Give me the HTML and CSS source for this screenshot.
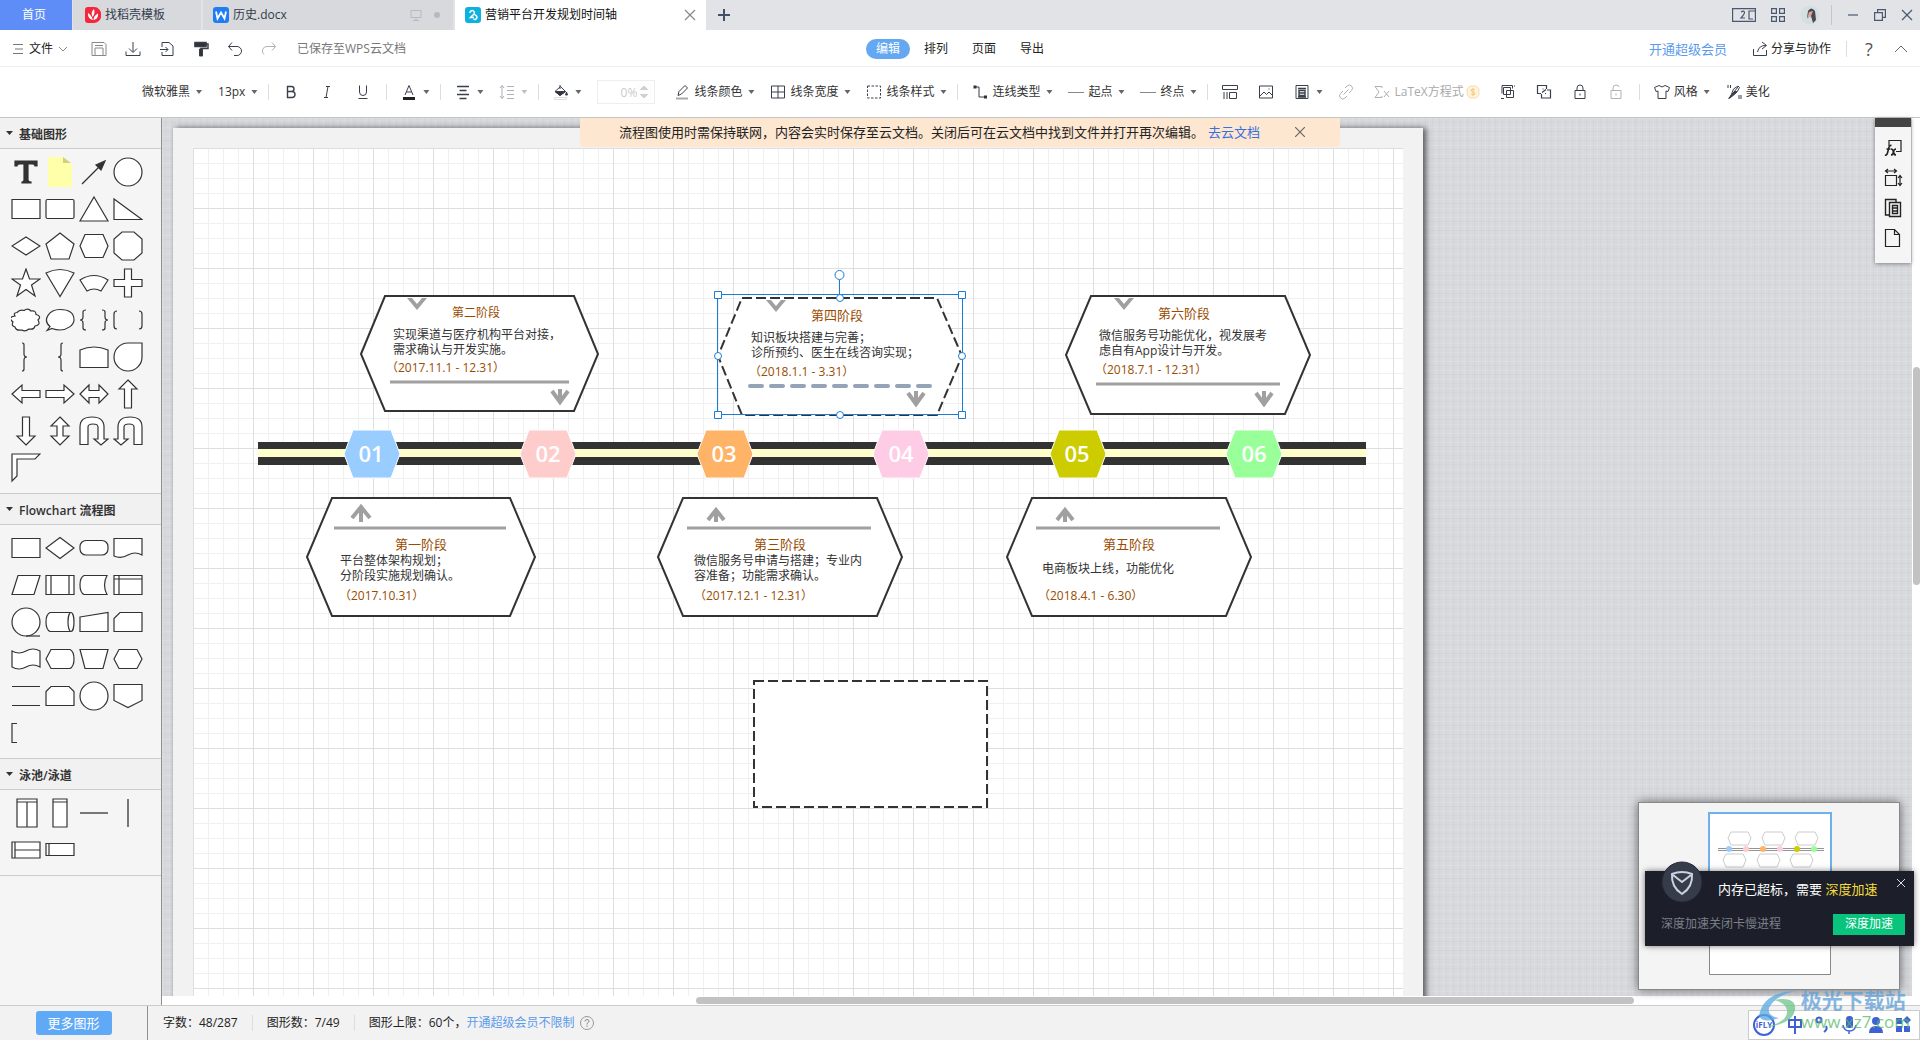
FILE: index.html
```html
<!DOCTYPE html>
<html lang="zh-CN">
<head>
<meta charset="utf-8">
<title>营销平台开发规划时间轴</title>
<link rel="stylesheet" href="styles.css">
</head>
<body>
<header class="tabs">
  <a class="tab tab-home" href="#">首页</a>
  <a class="tab tab-store" href="#">
    <svg class="logo" viewBox="0 0 16 16"><path d="M3 0h6a7 7 0 0 1 7 8a7 7 0 0 1-7 8H3a3 3 0 0 1-3-3V3a3 3 0 0 1 3-3z" fill="#f5273c"/><path d="M8 13C4 12 2.500 9 3 6c2 1 3.500 3 5 7zM7.500 10C6 7 6.500 4 9 2c1 3 .5 6-1.500 8zM8.500 13c0-3 1.500-5 4.500-6.500C13.500 10 11.500 12.500 8.500 13z" fill="#fff"/></svg>
    <span>找稻壳模板</span>
  </a>
  <a class="tab tab-doc" href="#">
    <svg class="logo" viewBox="0 0 16 16"><rect width="16" height="16" rx="3" fill="#1f7df3"/><path d="M3 4.500l1.500 7L8 5.500l3.500 6L13 4.500" fill="none" stroke="#fff" stroke-width="1.800"/></svg>
    <span>历史.docx</span>
    <svg class="state" viewBox="0 0 34 12"><path d="M2 1.500h10v7H2zM7 8.500v3M4 11.500h6" fill="none" stroke="#b5b9c1"/><circle cx="28" cy="6" r="3" fill="#b5b9c1"/></svg>
  </a>
  <a class="tab tab-current" href="#">
    <svg class="logo" viewBox="0 0 16 16"><rect width="16" height="16" rx="3" fill="#0eb0e0"/><path d="M5 6a2.200 2.200 0 1 1 4 1L5.500 10.500H9M8.500 12a2.200 2.200 0 1 0 1-4" fill="none" stroke="#fff" stroke-width="1.500"/></svg>
    <span>营销平台开发规划时间轴</span>
    <svg class="close" viewBox="0 0 12 12"><path d="M1 1l10 10M11 1L1 11" fill="none" stroke="#888" stroke-width="1.200"/></svg>
  </a>
  <button class="plain new-tab" aria-label="新建标签"><svg viewBox="0 0 14 14" width="14" height="14"><path d="M7 1v12M1 7h12" stroke="#44506a" stroke-width="2"/></svg></button>
  <div class="window-tools">
    <svg width="24" height="14" viewBox="0 0 24 14" fill="none" stroke="#49586f" stroke-width="1.200"><path d="M.6.6h22.800v12.800H.6zM23 3h-6v8h4M9 4q3-2 3.500.5Q12.500 6 9 10h4"/></svg>
    <svg width="14" height="14" viewBox="0 0 14 14" fill="none" stroke="#49586f" stroke-width="1.200"><path d="M.6.6h4.800v4.800H.6zM8.600.6h4.800v4.800H8.600zM.6 8.600h4.800v4.800H.6zM8.600 8.600h4.800v4.800H8.600z"/></svg>
    <svg class="avatar" width="20" height="20" viewBox="0 0 20 20"><circle cx="10" cy="10" r="9.500" fill="#d3dfe0"/><path d="M8 6q3-5 7 0l1 9-3 3-2-7-4 2z" fill="#4d4650"/><path d="M9 7l4-1-2 5-4 3z" fill="#d9a7a0"/></svg>
    <i class="bar"></i>
    <svg width="12" height="12" viewBox="0 0 12 12"><path d="M1 6h10" stroke="#49586f" stroke-width="1.200"/></svg>
    <svg width="12" height="12" viewBox="0 0 12 12" fill="none" stroke="#49586f" stroke-width="1.200"><path d="M.6 3.600h7.800v7.800H.6zM3.600 3.600v-3h7.800v7.800h-3"/></svg>
    <svg width="12" height="12" viewBox="0 0 12 12"><path d="M1 1l10 10M11 1L1 11" stroke="#49586f" stroke-width="1.200"/></svg>
  </div>
</header>

<nav class="menubar">
  <div class="menu-left">
    <button class="plain file"><svg width="12" height="12" viewBox="0 0 12 12"><path d="M1 1.500h10M3 6h8M1 10.500h10" stroke="#777"/></svg>文件<svg width="10" height="6" viewBox="0 0 10 6"><path d="M1 1l4 4 4-4" fill="none" stroke="#888"/></svg></button>
    <svg class="ico" viewBox="0 0 16 16"><path d="M1 1.500h12l2 2v11H1zM4 15V7h8v8M4 4.500h8" stroke="#888"/></svg>
    <svg class="ico" viewBox="0 0 16 16"><path d="M8 1v10M4 7.500l4 4 4-4M1 10.500v4h14v-4"/></svg>
    <svg class="ico" viewBox="0 0 16 16"><path d="M3 6V1.500h7l4 3.500v9.500H3V11M1 8.500h8M6.500 6L9 8.500 6.500 11"/></svg>
    <svg class="ico" viewBox="0 0 16 16"><path d="M2 1.500h11v4H2zM13 3h2v4.500H8V15" stroke-width="1.500"/><path d="M2 1.500h11v4H2zM6.500 8h3v7h-3z" fill="#333"/></svg>
    <svg class="ico" viewBox="0 0 16 16"><path d="M5 1.500l-3.500 4L5 9.500M1.500 5.500H10a4.500 4.500 0 0 1 0 9H7"/></svg>
    <svg class="ico dim" viewBox="0 0 16 16"><path d="M11 1.500l3.500 4-3.500 4M14.500 5.500H6a4.500 4.500 0 0 0-3 8"/></svg>
    <span class="saved">已保存至WPS云文档</span>
  </div>
  <div class="modes">
    <button class="plain mode on">编辑</button><button class="plain mode">排列</button><button class="plain mode">页面</button><button class="plain mode">导出</button>
  </div>
  <div class="menu-right">
    <a class="vip" href="#">开通超级会员</a>
    <button class="plain share"><svg class="ico" viewBox="0 0 16 16"><path d="M10 1l4.500 3.500L10 8M14 4.500Q7 4 5.500 11M1.500 8v6.500h13V9"/></svg>分享与协作</button>
    <i class="bar"></i>
    <span class="help">?</span>
    <svg width="14" height="8" viewBox="0 0 14 8"><path d="M1 7l6-6 6 6" fill="none" stroke="#666"/></svg>
  </div>
</nav>

<div class="toolbar">
  <button class="plain tool">微软雅黑<i class="caret"></i></button>
  <button class="plain tool size">13px<i class="caret"></i></button>
  <i class="bar"></i>
  <button class="plain tool solo" aria-label="加粗"><svg class="ico" viewBox="0 0 16 16"><path d="M4.500 2.500h4a2.500 2.500 0 0 1 0 5h-4zM4.500 7.500h4.500a3 3 0 0 1 0 6H4.500z" stroke-width="1.400"/></svg></button>
  <button class="plain tool solo" aria-label="斜体"><svg class="ico" viewBox="0 0 16 16"><path d="M7 2.500h4M5 13.500h4M9 2.500l-2 11"/></svg></button>
  <button class="plain tool solo" aria-label="下划线"><svg class="ico" viewBox="0 0 16 16"><path d="M4.500 1.500V8a3.500 3.500 0 0 0 7 0V1.500M3.500 14.500h9"/></svg></button>
  <i class="bar"></i>
  <button class="plain tool" aria-label="字体颜色"><svg class="ico" viewBox="0 0 16 16"><path d="M4 11l4-9.500L12 11M5.500 8h5"/><path d="M2 14.500h12" stroke="#222" stroke-width="3"/></svg><i class="caret"></i></button>
  <i class="bar"></i>
  <button class="plain tool" aria-label="对齐"><svg class="ico" viewBox="0 0 16 16"><path d="M2 2.500h12M4.500 6.500h7M2 10.500h12M4.500 14.500h7" stroke-width="1.400"/></svg><i class="caret"></i></button>
  <button class="plain tool dim" aria-label="行距"><svg class="ico" viewBox="0 0 16 16"><path d="M3 1.500v13M1 4l2-2.500L5 4M1 12l2 2.500L5 12M8 2.500h7M8 6.500h7M8 10.500h7M8 14.500h7"/></svg><i class="caret"></i></button>
  <i class="bar"></i>
  <button class="plain tool" aria-label="填充"><svg class="ico" viewBox="0 0 16 16"><path d="M7 1v4M2 7.500l5.500-5 5 5-5.500 4z"/><path d="M2 7.500h10.500L7 11.500zM13.500 8l1 3h-2z" fill="#333"/><path d="M1.500 13.500h12v2h-12z" stroke="#ddd"/></svg><i class="caret"></i></button>
  <input class="opacity" type="number" aria-label="透明度" placeholder="0%">
  <button class="plain tool"><svg class="ico" viewBox="0 0 16 16"><path d="M4 11.500l1-4 6-6 2.500 2.500-6 6z"/><path d="M2 14.500h12" stroke="#aaa" stroke-width="2"/></svg>线条颜色<i class="caret"></i></button>
  <button class="plain tool"><svg class="ico" viewBox="0 0 16 16"><path d="M1.500 2h13v12h-13zM8 2v12M1.500 8h13" /></svg>线条宽度<i class="caret"></i></button>
  <button class="plain tool"><svg class="ico" viewBox="0 0 16 16"><path d="M1.500 2h13v12h-13z" stroke-dasharray="2.500 1.500"/></svg>线条样式<i class="caret"></i></button>
  <i class="bar"></i>
  <button class="plain tool"><svg class="ico" viewBox="0 0 16 16"><path d="M3 3h4v10h6"/><path d="M1.500 1.500h3v3h-3zM12 11.500h3v3h-3z" fill="#333" stroke="none"/></svg>连线类型<i class="caret"></i></button>
  <button class="plain tool"><svg class="ico" viewBox="0 0 16 16"><path d="M0 8.500h16" stroke="#888"/></svg>起点<i class="caret"></i></button>
  <button class="plain tool"><svg class="ico" viewBox="0 0 16 16"><path d="M0 8.500h16" stroke="#888"/></svg>终点<i class="caret"></i></button>
  <i class="bar"></i>
  <button class="plain tool solo" aria-label="布局"><svg class="ico" viewBox="0 0 16 16"><path d="M.5 1.500h15v4H.5zM2 8v7M5 8v7M7.500 8.500h7v6h-7z"/></svg></button>
  <button class="plain tool solo" aria-label="图片"><svg class="ico" viewBox="0 0 16 16"><path d="M1.500 2h13v12h-13zM2 12l4-4 2.500 2.500L11 8l3.500 3.500M11 4.500v1"/></svg></button>
  <button class="plain tool" aria-label="图例"><svg class="ico" viewBox="0 0 16 16"><path d="M2 1.500h12v13H2z"/><path d="M4 4.500h8M5 6.500h6v5H5zM5 9h6M4 13h8" stroke-width="1.400"/></svg><i class="caret"></i></button>
  <button class="plain tool solo dim" aria-label="链接"><svg class="ico" viewBox="0 0 16 16"><path d="M7 4l2-2a3 3 0 0 1 4.500 4.500L11 9M9 12l-2 2a3 3 0 0 1-4.500-4.500L5 7M5.500 10.500l5-5"/></svg></button>
  <button class="plain tool solo latex"><svg class="ico dim" viewBox="0 0 16 16"><path d="M8 4V2.500H1L5 8l-4 5.500h7V12M10 7l5 6M15 7l-5 6"/></svg>LaTeX方程式<svg class="coin" viewBox="0 0 14 14"><path d="M4 1h6l3 3v6l-3 3H4l-3-3V4z" fill="#fff3dc" stroke="#f9ddb0"/><path d="M9 5q-3-2-4 0 0 1.500 2 2t2 2q-1 2-4 0M7 3v8" fill="none" stroke="#f6c67c"/></svg></button>
  <button class="plain tool solo" aria-label="组合"><svg class="ico" viewBox="0 0 16 16"><path d="M3.500 3.500h7v7h-7zM6.500 6.500h7v7h-7zM2 1.500h10.500v3M14 2h1M1 14.500h3M2 1.500v8"/></svg></button>
  <button class="plain tool solo" aria-label="取消组合"><svg class="ico" viewBox="0 0 16 16"><path d="M5 9.500H1.500v-8h9V5M11 6h3.500v8h-9V10M6 8.500l4-3M6.500 5h1M9 9.500h1" stroke-width="1.200"/></svg></button>
  <button class="plain tool solo" aria-label="锁定"><svg class="ico" viewBox="0 0 16 16"><path d="M3 6.500h10v8H3zM5 6V4q0-3 3-3t3 3v2M8 9.500v2"/></svg></button>
  <button class="plain tool solo dim" aria-label="解锁"><svg class="ico" viewBox="0 0 16 16"><path d="M3 6.500h10v8H3zM5 6V4q0-3 3-3t3 2M8 9.500v2"/></svg></button>
  <i class="bar"></i>
  <button class="plain tool"><svg class="ico" viewBox="0 0 16 16"><path d="M5 1.500q3 3 6 0l4.500 2-1.500 4-2-.5v7.500H4V7l-2 .5-1.500-4z"/></svg>风格<i class="caret"></i></button>
  <button class="plain tool"><svg class="ico" viewBox="0 0 16 16"><path d="M2.500 14.500L12 3M4 14l7-6 2.500-4.500L12 2 7.500 5z"/><path d="M2 1v3M4.500 1v3M13 11v4M15 11v4"/><path d="M3 14.500L9 7l2 1z" fill="#333"/></svg>美化</button>
</div>

<main class="work">
  <aside class="palette">
    <section>
      <h2>基础图形</h2>
      <div class="shapes">
        <button class="plain" aria-label="文本"><svg viewBox="-15 -15 30 30"><path d="M-11-11h22v5h-2q0-2-3-2H2V8q0 2 3 2v1H-4v-1q2 0 2-2V-8h-4q-3 0-3 2h-2z" class="solid"/></svg></button>
        <button class="plain" aria-label="备注"><svg viewBox="-15 -15 30 30"><path class="note" d="M-12-15H4l8 8V15h-24z"/><path class="note-fold" d="M3-15l8 6H3z"/></svg></button>
        <button class="plain" aria-label="箭头线"><svg viewBox="-15 -15 30 30"><path d="M-12 12L8-8"/><path d="M11-11L7-2 2-7z" class="solid"/></svg></button>
        <button class="plain" aria-label="圆形"><svg viewBox="-15 -15 30 30"><circle r="14"/></svg></button>
        <button class="plain" aria-label="矩形"><svg viewBox="-15 -15 30 30"><path d="M-14-9.500h28v19h-28z"/></svg></button>
        <button class="plain" aria-label="圆角矩形"><svg viewBox="-15 -15 30 30"><rect x="-14" y="-9.500" width="28" height="19" rx="1.500"/></svg></button>
        <button class="plain" aria-label="三角形"><svg viewBox="-15 -15 30 30"><path d="M0-12l14 24h-28z"/></svg></button>
        <button class="plain" aria-label="直角三角形"><svg viewBox="-15 -15 30 30"><path d="M-14-10v20.500h28z"/></svg></button>
        <button class="plain" aria-label="菱形"><svg viewBox="-15 -15 30 30"><path d="M0-9L14 0 0 9-14 0z"/></svg></button>
        <button class="plain" aria-label="五边形"><svg viewBox="-15 -15 30 30"><path d="M0-13L14-2 9 13H-9L-14-2z"/></svg></button>
        <button class="plain" aria-label="六边形"><svg viewBox="-15 -15 30 30"><path d="M-9-11.500H9L14 0 9 11.500H-9L-14 0z"/></svg></button>
        <button class="plain" aria-label="八边形"><svg viewBox="-15 -15 30 30"><path d="M-6-14H6l8 7V7l-8 7H-6l-8-7V-7z"/></svg></button>
        <button class="plain" aria-label="五角星"><svg viewBox="-15 -15 30 30"><path d="M0-14l3.500 10H14L5.500 2 9 13 0 6.500-9 13-5.500 2-14-4h10.500z"/></svg></button>
        <button class="plain" aria-label="扇形"><svg viewBox="-15 -15 30 30"><path d="M0 13.500L-14-10Q0-17 14-10z"/></svg></button>
        <button class="plain" aria-label="环形扇"><svg viewBox="-15 -15 30 30"><path d="M-14-3Q0-12 14-3L7 8Q0 4-7 8z"/></svg></button>
        <button class="plain" aria-label="十字"><svg viewBox="-15 -15 30 30"><path d="M-3.500-14h7v10.500H14v7H3.500V14h-7V3.500H-14v-7h10.500z"/></svg></button>
        <button class="plain" aria-label="云"><svg viewBox="-15 -15 30 30"><path d="M-9-7.500Q-6-11-2-9.500q4-3 7 .5 5-1 5 3.500 6 1.500 2 5.500 3 5-3 6-1 4-6 3-4 3-7 1-6 1-7-3-4-1-2-5-6-5 2-6-2-3 2-3.500z"/></svg></button>
        <button class="plain" aria-label="气泡"><svg viewBox="-15 -15 30 30"><path d="M-13 10.500l3-4C-18 0-11-10.500 0-10.500S14-5 14 0 7 10 0 10q-4 0-8-1.500z"/></svg></button>
        <button class="plain" aria-label="双花括号"><svg viewBox="-15 -15 30 30"><path class="open" d="M-8-10q-3 0-3 2v5q0 3-3 3 3 0 3 3v5q0 2 3 2M8-10q3 0 3 2v5q0 3 3 3-3 0-3 3v5q0 2-3 2"/></svg></button>
        <button class="plain" aria-label="双括号"><svg viewBox="-15 -15 30 30"><path class="open" d="M-11-9q-3 0-3 3V6q0 3 3 3M11-9q3 0 3 3V6q0 3-3 3"/></svg></button>
        <button class="plain" aria-label="右花括号"><svg viewBox="-15 -15 30 30"><path class="open" d="M-4-14q2 0 2 2v9q0 3 3 3-3 0-3 3v9q0 2-2 2"/></svg></button>
        <button class="plain" aria-label="左花括号"><svg viewBox="-15 -15 30 30"><path class="open" d="M3-14q-2 0-2 2v9q0 3-3 3 3 0 3 3v9q0 2 2 2"/></svg></button>
        <button class="plain" aria-label="拱形"><svg viewBox="-15 -15 30 30"><path d="M-14-7Q0-13 14-7v17.500h-28z"/></svg></button>
        <button class="plain" aria-label="水滴"><svg viewBox="-15 -15 30 30"><path d="M0-14h14V0A14 14 0 1 1 0-14z"/></svg></button>
        <button class="plain" aria-label="左箭头"><svg viewBox="-15 -15 30 30"><path d="M-14 0l10-9v5.500h18v7H-4V9z"/></svg></button>
        <button class="plain" aria-label="右箭头"><svg viewBox="-15 -15 30 30"><path d="M14 0L4-9v5.500h-18v7H4V9z"/></svg></button>
        <button class="plain" aria-label="左右箭头"><svg viewBox="-15 -15 30 30"><path d="M-14 0l9-9v5.500H5V-9l9 9-9 9V3.500H-5V9z"/></svg></button>
        <button class="plain" aria-label="上箭头"><svg viewBox="-15 -15 30 30"><path d="M0-14l9 9H3.500v19h-7V-5H-9z"/></svg></button>
        <button class="plain" aria-label="下箭头"><svg viewBox="-15 -15 30 30"><path d="M0 14l9-9H3.500v-19h-7V5H-9z"/></svg></button>
        <button class="plain" aria-label="上下箭头"><svg viewBox="-15 -15 30 30"><path d="M0-14l9 9H3V5h6l-9 9-9-9h6V-5h-6z"/></svg></button>
        <button class="plain" aria-label="右回转箭头"><svg viewBox="-15 -15 30 30"><path d="M-14 13.500V-4q0-10 12-10t12 10V8h4l-7 6-7-6h4v-12q0-3-5-3t-5 3v17.500z"/></svg></button>
        <button class="plain" aria-label="左回转箭头"><svg viewBox="-15 -15 30 30"><path d="M14 13.500V-4q0-10-12-10T-10-4V8h-4l7 6 7-6h-4v-12q0-3 5-3t5 3v17.500z"/></svg></button>
        <button class="plain" aria-label="直角"><svg viewBox="-15 -15 30 30"><path d="M-14 13v-27h28l-5 5H-9V8z"/></svg></button>
      </div>
    </section>
    <section>
      <h2>Flowchart 流程图</h2>
      <div class="shapes">
        <button class="plain" aria-label="流程"><svg viewBox="-15 -15 30 30"><path d="M-14-9.500h28v19h-28z"/></svg></button>
        <button class="plain" aria-label="判定"><svg viewBox="-15 -15 30 30"><path d="M0-10.500L14 0 0 10.500-14 0z"/></svg></button>
        <button class="plain" aria-label="开始结束"><svg viewBox="-15 -15 30 30"><rect x="-14" y="-7.500" width="28" height="14.500" rx="6"/></svg></button>
        <button class="plain" aria-label="文档"><svg viewBox="-15 -15 30 30"><path d="M-14-9.500h28V7Q7 3 0 7t-14 1z"/></svg></button>
        <button class="plain" aria-label="数据"><svg viewBox="-15 -15 30 30"><path d="M-8-9.500h22l-6 19h-22z"/></svg></button>
        <button class="plain" aria-label="子流程"><svg viewBox="-15 -15 30 30"><path d="M-14-9.500h28v19h-28zM-9-9.500v19M9-9.500v19"/></svg></button>
        <button class="plain" aria-label="外部数据"><svg viewBox="-15 -15 30 30"><path d="M13-9.500h-23q-4 2-4 9.500t4 9.500h23Q8 0 13-9.500z"/></svg></button>
        <button class="plain" aria-label="内部存储"><svg viewBox="-15 -15 30 30"><path d="M-14-9.500h28v19h-28zM-14-6h28M-9-9.500v19"/></svg></button>
        <button class="plain" aria-label="队列数据"><svg viewBox="-15 -15 30 30"><circle r="14"/><path class="open" d="M0 14h14"/></svg></button>
        <button class="plain" aria-label="数据库"><svg viewBox="-15 -15 30 30"><path d="M11-9.500h-21q-4 2-4 9.500t4 9.500h21z"/><ellipse cx="11" rx="3" ry="9.500"/></svg></button>
        <button class="plain" aria-label="人工输入"><svg viewBox="-15 -15 30 30"><path d="M-14-5l28-4.500v19h-28z"/></svg></button>
        <button class="plain" aria-label="卡片"><svg viewBox="-15 -15 30 30"><path d="M-8-9.500h22v19h-28v-13z"/></svg></button>
        <button class="plain" aria-label="条带"><svg viewBox="-15 -15 30 30"><path d="M-14-8q7 4 14 0t14 0V8q-7-4-14 0t-14 0z"/></svg></button>
        <button class="plain" aria-label="展示"><svg viewBox="-15 -15 30 30"><path d="M-9-9.500h19q4 2 4 9.500t-4 9.500H-9L-14 0z"/></svg></button>
        <button class="plain" aria-label="人工操作"><svg viewBox="-15 -15 30 30"><path d="M-14-9.500h28l-5 19H-9z"/></svg></button>
        <button class="plain" aria-label="准备"><svg viewBox="-15 -15 30 30"><path d="M-9-9.500H9L14 0 9 9.500H-9L-14 0z"/></svg></button>
        <button class="plain" aria-label="并行模式"><svg viewBox="-15 -15 30 30"><path d="M-14-9.500h28M-14 9.500h28"/></svg></button>
        <button class="plain" aria-label="循环限值"><svg viewBox="-15 -15 30 30"><path d="M-9-9.500H9l5 5v14h-28v-14z"/></svg></button>
        <button class="plain" aria-label="页面内引用"><svg viewBox="-15 -15 30 30"><circle r="14"/></svg></button>
        <button class="plain" aria-label="跨页引用"><svg viewBox="-15 -15 30 30"><path d="M-14-11.500h28v16L0 11.500-14 4.500z"/></svg></button>
        <button class="plain" aria-label="注释"><svg viewBox="-15 -15 30 30"><path class="open" d="M-9-9.500h-5v19h5"/></svg></button>
      </div>
    </section>
    <section>
      <h2>泳池/泳道</h2>
      <div class="shapes">
        <button class="plain" aria-label="垂直泳池"><svg viewBox="-15 -15 30 30"><path d="M-9-14h20v28H-9zM-9-11h20M1-11v25"/></svg></button>
        <button class="plain" aria-label="垂直泳道"><svg viewBox="-15 -15 30 30"><path d="M-7-14H7v28H-7zM-7-11H7"/></svg></button>
        <button class="plain" aria-label="水平分隔"><svg viewBox="-15 -15 30 30"><path class="rule" d="M-14 0h28"/></svg></button>
        <button class="plain" aria-label="垂直分隔"><svg viewBox="-15 -15 30 30"><path class="rule" d="M0-14v28"/></svg></button>
        <button class="plain" aria-label="水平泳池"><svg viewBox="-15 -15 30 30"><path d="M-14-8h28V8h-28zM-11-8V8M-11 0h25"/></svg></button>
        <button class="plain" aria-label="水平泳道"><svg viewBox="-15 -15 30 30"><path d="M-14-6.500h28v12h-28zM-11-6.500v12"/></svg></button>
      </div>
    </section>
  </aside>

  <div class="stage">
    <div class="canvas">
      <div class="sheet">
        <div class="grid"></div>
        <svg class="diagram" viewBox="173 128 1250 880">
          <defs>
            <g id="down"><path d="M0 0v12M-8 2L0 13 8 2" fill="none" stroke="#a0a0a0" stroke-width="4"/></g>
            <g id="up"><path d="M0 14V2M-8 12L0 2l8 10" fill="none" stroke="#a0a0a0" stroke-width="4"/></g>
            <g id="up-long"><path d="M0 18V3M-9 14L0 3l9 11" fill="none" stroke="#a0a0a0" stroke-width="4"/></g>
            <path id="vee" d="M-10 0h5L0 6 5 0h5L0 12z" fill="#a0a0a0"/>
            <path id="stop" d="M-28 0l9-24h38l9 24-9 24h-38z" stroke="#fff"/>
          </defs>
          <g class="node">
            <path d="M361 354l24-58h189l24 58-24 57H385z"/>
            <path d="M307 557l25-59h178l25 59-25 59H332z"/>
            <path d="M658 557l25-59h194l25 59-25 59H683z"/>
            <path class="dash" d="M742 298h195l25 58-25 59H742l-24-59z"/>
            <path d="M1007 557l25-59h194l25 59-25 59h-194z"/>
            <path d="M1066 355l25-59h194l25 59-25 59h-194z"/>
            <path class="dash" d="M754 681h233v126H754z"/>
          </g>
          <path d="M258 442h1108v23H258z" fill="#333"/>
          <path d="M258 449h1108v8H258z" fill="#ffc"/>
          <g class="rules"><path d="M390 382h179M334 528h172M687 528h184M1036 528h184M1096 384h184"/></g>
          <path d="M750 386h181" stroke="#93a3b8" stroke-width="4" stroke-linecap="round" stroke-dasharray="12 9" fill="none"/>
          <use href="#vee" x="417" y="298"/><use href="#vee" x="776" y="300"/><use href="#vee" x="1124" y="298"/>
          <use href="#down" x="560" y="389"/><use href="#down" x="916" y="391"/><use href="#down" x="1264" y="391"/>
          <use href="#up-long" x="361" y="504"/><use href="#up" x="716" y="508"/><use href="#up" x="1065" y="508"/>
          <use href="#stop" x="372" y="454" fill="#9cf"/><use href="#stop" x="548" y="454" fill="#fcc"/><use href="#stop" x="725" y="454" fill="#ffb366"/>
          <use href="#stop" x="901" y="454" fill="#ffcce6"/><use href="#stop" x="1078" y="454" fill="#cc0"/><use href="#stop" x="1254" y="454" fill="#9f9"/>
          <g class="num">
            <text x="371" y="462">01</text><text x="548" y="462">02</text><text x="724" y="462">03</text>
            <text x="901" y="462">04</text><text x="1077" y="462">05</text><text x="1254" y="462">06</text>
          </g>
          <g class="phase">
            <text class="small" x="452" y="317">第二阶段</text><text x="811" y="320">第四阶段</text><text x="1158" y="318">第六阶段</text>
            <text x="395" y="549">第一阶段</text><text x="754" y="549">第三阶段</text><text x="1103" y="549">第五阶段</text>
          </g>
          <g class="desc">
            <text x="393" y="339">实现渠道与医疗机构平台对接，</text><text x="393" y="354">需求确认与开发实施。</text>
            <text x="751" y="342">知识板块搭建与完善；</text><text x="751" y="357">诊所预约、医生在线咨询实现；</text>
            <text x="1099" y="340">微信服务号功能优化，视发展考</text><text x="1099" y="355">虑自有App设计与开发。</text>
            <text x="340" y="565">平台整体架构规划；</text><text x="340" y="580">分阶段实施规划确认。</text>
            <text x="694" y="565">微信服务号申请与搭建；专业内</text><text x="694" y="580">容准备；功能需求确认。</text>
            <text x="1042" y="573">电商板块上线，功能优化</text>
          </g>
          <g class="date">
            <text x="386" y="372">（2017.11.1 - 12.31）</text><text x="749" y="376">（2018.1.1 - 3.31）</text><text x="1095" y="374">（2018.7.1 - 12.31）</text>
            <text x="339" y="600">（2017.10.31）</text><text x="694" y="600">（2017.12.1 - 12.31）</text><text x="1038" y="600">（2018.4.1 - 6.30）</text>
          </g>
          <g fill="none" stroke="#1c7cd5" stroke-width="1"><path d="M717.500 294.500h245v120h-245zM839.500 280v14"/></g>
          <g fill="#fff" stroke="#1c7cd5">
            <path d="M714.500 291.500h7v7h-7zM958.500 291.500h7v7h-7zM714.500 411.500h7v7h-7zM958.500 411.500h7v7h-7z"/>
            <circle cx="840" cy="298" r="3.500"/><circle cx="840" cy="415" r="3.500"/><circle cx="718" cy="356" r="3.500"/><circle cx="962" cy="356" r="3.500"/><circle cx="839.500" cy="275" r="4.500"/>
          </g>
        </svg>
      </div>
    </div>
    <div class="vscroll"><i></i></div>
    <div class="hscroll"><i></i></div>

    <p class="notice">流程图使用时需保持联网，内容会实时保存至云文档。关闭后可在云文档中找到文件并打开再次编辑。<a href="#">去云文档</a><svg width="10" height="10" viewBox="0 0 10 10"><path d="M0 0l10 10M10 0L0 10" stroke="#666" stroke-width="1.200"/></svg></p>

    <div class="dock">
      <svg viewBox="0 0 20 20"><path d="M6 8V2.500h12v11h-5"/><path d="M2 17q2 1 3-4l1-4q1-2 2.500-1.500M3.500 11h4M8 11q2 0 2.500 3t2.500 3M13 11q-2 0-2.500 3T8 17" stroke-width="1.600"/></svg>
      <svg viewBox="0 0 20 20"><path d="M2.500 7.500h11v10h-11zM3 3h10M5 1L2.500 3 5 5M11 1l2.500 2L11 5M17 8v9M15 10l2-2.500 2 2.500M15 15l2 2.500 2-2.500"/></svg>
      <svg viewBox="0 0 20 20"><path d="M6 17H2.500V1.500H13V4M6.500 4.500h11v14h-11zM9.500 7.500h5v8h-5zM10 10h4M10 13h4" stroke-width="1.400"/></svg>
      <svg viewBox="0 0 20 20"><path d="M2.500 1.500h9l5 5v12h-14zM11.500 1.500v5h5"/></svg>
    </div>

    <div class="navigator">
      <svg viewBox="0 0 260 186">
        <path d="M70.500 10.500h121v161h-121z" fill="#fff" stroke="#888"/>
        <path d="M70 10h122v80H70z" fill="#fff" stroke="#6eb1ec" stroke-width="2"/>
        <g fill="#fff" stroke="#ccc">
          <path id="mini" d="M89 35l3-6h17l3 6-3 7H92z"/>
          <use href="#mini" x="34"/><use href="#mini" x="67"/><use href="#mini" x="-5" y="22"/><use href="#mini" x="29" y="22"/><use href="#mini" x="62" y="22"/>
        </g>
        <path d="M79 45.500h106M79 47.500h106" stroke="#666" stroke-width=".7"/>
        <g><circle cx="90" cy="46" r="3" fill="#9cf"/><circle cx="107" cy="46" r="3" fill="#fcc"/><circle cx="124" cy="46" r="3" fill="#ffb366"/><circle cx="141" cy="46" r="3" fill="#ffcce6"/><circle cx="158" cy="46" r="3" fill="#cc0"/><circle cx="175" cy="46" r="3" fill="#9f9"/></g>
      </svg>
    </div>
  </div>
</main>

<footer class="status">
  <div class="more"><button class="more-btn">更多图形</button></div>
  <span>字数：48/287</span><i class="bar"></i>
  <span>图形数：7/49</span><i class="bar"></i>
  <span>图形上限：60个，<a href="#">开通超级会员不限制</a></span>
  <svg width="14" height="14" viewBox="0 0 14 14"><circle cx="7" cy="7" r="6.500" fill="none" stroke="#999"/><path d="M5 5.500q0-2 2-2t2 1.700q0 1-2 2.300v1M7 9.500v1.500" fill="none" stroke="#888"/></svg>
</footer>

<div class="popup" role="alert">
  <svg class="shield" viewBox="0 0 42 42"><circle cx="21" cy="21" r="20" fill="#363c4a" stroke="#232836"/><path d="M11 13q10-4 20 0 1 13-10 20-11-7-10-20zM12 14l9 7 9-7" fill="none" stroke="#ccd0e0" stroke-width="2"/></svg>
  <p class="popup-title">内存已超标，需要 <em>深度加速</em></p>
  <p class="popup-desc">深度加速关闭卡慢进程</p>
  <button class="boost">深度加速</button>
  <svg class="popup-close" viewBox="0 0 10 10"><path d="M1 1l8 8M9 1L1 9" stroke="#ddd"/></svg>
</div>

<div class="ime">
  <svg viewBox="0 0 170 28">
    <g fill="none" stroke="#4060d8" stroke-width="2"><circle cx="15" cy="14" r="10"/><path d="M40 9h12v7H40zM46 5v18"/><circle cx="70" cy="9" r="2.500"/><path d="M77 15q2 3-2 6"/></g>
    <text class="ifly" x="15" y="17">iFLY</text>
    <g fill="#4060d8"><rect x="97" y="5" width="7" height="12" rx="3"/><circle cx="127" cy="10" r="4"/><path d="M120 22q0-7 7-7t7 7zM147 7h6v6h-6zM147 15h6v6h-6zM155 15h6v6h-6zM158 5l4 4-4 4-4-4z"/></g>
    <path d="M94 14q1 6 6.500 6t6.500-6M100 20v3" fill="none" stroke="#4060d8" stroke-width="1.500"/>
  </svg>
</div>
<div class="watermark">
  <svg viewBox="0 0 44 42"><path d="M2 28Q6 4 38 3 18 8 12 20q-2 8 10 10Q6 36 2 28z" fill="#59a8e0"/><path d="M16 12Q40 8 38 22T6 40q26-6 24-18-2-8-14-10z" fill="#6fc48a"/></svg>
  <div><b>极光下载站</b><span>www.xz7.com</span></div>
</div>
</body>
</html>
```

FILE: styles.css
```css
* { box-sizing: border-box; }

body {
  margin: 0;
  height: 100vh;
  display: flex;
  flex-direction: column;
  overflow: hidden;
  position: relative;
  background: #fff;
  color: #333;
  font: 12px/16px "Open Sans", "Noto Sans CJK SC", sans-serif;
}

svg { display: block; flex: none; }
a { color: inherit; text-decoration: none; }
p, h2 { margin: 0; }
.plain {
  display: flex;
  align-items: center;
  padding: 0;
  border: 0;
  background: none;
  color: inherit;
  font: inherit;
}
.bar { flex: none; width: 1px; height: 16px; background: #ddd; }
.ico { width: 16px; height: 16px; fill: none; stroke: #3a3f4c; stroke-width: 1; }
.dim { opacity: 0.4; }

/* Document tabs */
.tabs { flex: none; display: flex; height: 30px; background: #e2e3e6; }
.tab {
  display: flex;
  align-items: center;
  gap: 4px;
  padding: 0 12px;
  background: #d8d9dc;
  border-right: 2px solid #e2e3e6;
  color: #333c4c;
}
.logo { width: 16px; height: 16px; }
.tab-home { width: 73px; justify-content: center; background: #5f8df7; color: #fff; border-right-width: 1px; padding: 0 14px 0 10px; }
.tab-store { width: 130px; }
.tab-doc { width: 252px; padding: 0 10px; }
.state { width: 34px; height: 12px; margin-left: auto; }
.tab-current { width: 251px; background: #fff; color: #111; border: 0; padding: 0 10px; }
.close { width: 12px; height: 12px; margin-left: auto; }
.new-tab { margin-left: 11px; }
.window-tools { display: flex; align-items: center; gap: 15px; margin-left: auto; padding-right: 7px; }
.window-tools .bar { background: #c4c6ca; height: 20px; margin-left: -4px; }

/* Menu row */
.menubar {
  flex: none;
  display: grid;
  grid-template-columns: 1fr auto 1fr;
  align-items: center;
  height: 37px;
  padding-top: 2px;
  border-bottom: 1px solid #eee;
}
.menu-left { display: flex; align-items: center; gap: 18px; padding-left: 12px; }
.file { gap: 5px; margin-right: 5px; color: #222; }
.saved { color: #777; margin-left: 2px; }
.modes { display: flex; gap: 4px; }
.mode { height: 20px; padding: 0 10px; border-radius: 10px; color: #222; }
.mode.on { background: #64a7f2; color: #fff; }
.menu-right { display: flex; align-items: center; justify-content: flex-end; gap: 15px; padding-right: 12px; }
.vip { color: #5b9bec; font-size: 13px; margin-right: 10px; }
.share { gap: 3px; color: #222; }
.help { width: 14px; font-size: 18px; color: #555; text-align: center; margin-right: 3px; }

/* Formatting toolbar */
.toolbar {
  flex: none;
  display: flex;
  align-items: center;
  gap: 15px;
  height: 51px;
  padding-left: 142px;
  border-bottom: 1px solid #c4c4c4;
  white-space: nowrap;
}
.toolbar .bar { margin: 0 -1px 0 -5px; }
.tool { flex: none; gap: 4px; }
.tool.solo { margin-right: 5px; }
.latex { color: #aaa; }
.caret {
  width: 8px;
  height: 4px;
  margin-left: 1px;
  background: #666;
  clip-path: polygon(1px 0, 7px 0, 4px 4px);
}
.coin { width: 14px; height: 14px; margin-left: -2px; }
.opacity {
  flex: none;
  width: 58px;
  height: 24px;
  margin-right: 4px;
  padding: 0 2px;
  border: 1px solid #eee;
  color: #ccc;
  font: inherit;
  text-align: right;
}
.opacity::placeholder { color: #ccc; }
.opacity::-webkit-inner-spin-button { opacity: 0.4; }

/* Shape palette */
.work { flex: 1; display: flex; min-height: 0; }
.palette { flex: none; width: 162px; background: #f5f5f5; border-right: 1px solid #8f8f8f; }
.palette section { border-bottom: 1px solid #ccc; }
.palette h2 {
  display: flex;
  align-items: center;
  gap: 6px;
  height: 31px;
  padding: 3px 0 0 6px;
  border-bottom: 1px solid #ccc;
  background: #f1f1f1;
  font-size: 12px;
  font-weight: 600;
}
.palette h2::before {
  content: "";
  width: 7px;
  height: 4px;
  margin-bottom: 3px;
  background: #333;
  clip-path: polygon(0 0, 100% 0, 50% 100%);
}
.shapes { display: grid; grid-template-columns: repeat(4, 34px); grid-auto-rows: 37px; padding: 4px 9px 7px; }
.shapes button { justify-content: center; }
.shapes svg { width: 30px; height: 30px; fill: #fff; stroke: #333; stroke-width: 1.2; }
.shapes .open { fill: none; }
.shapes .solid { fill: #333; }
.shapes .rule { stroke: #777; stroke-width: 2; }
.shapes .note { fill: #ffa; stroke: none; }
.shapes .note-fold { fill: #d0d080; stroke: none; }

/* Drawing area */
.stage { flex: 1; min-width: 0; position: relative; display: grid; grid-template: 1fr 9px / 1fr 8px; }
.canvas {
  overflow: hidden;
  min-height: 0;
  padding: 10px 11px 0;
  background:
    repeating-linear-gradient(90deg, #ffffff1a 0 1px, #0000 1px 3px, #00000005 3px 4px, #0000 4px 7px),
    repeating-linear-gradient(#ffffff1a 0 1px, #0000 1px 4px, #00000005 4px 5px, #0000 5px 9px),
    #d8d9dd;
}
.sheet { position: relative; width: 1250px; height: 880px; padding: 20px 20px 0; background: #f2f2f2; box-shadow: 3px 0 6px #0009; }
.grid {
  height: 860px;
  background:
    repeating-linear-gradient(90deg, #dedede 0 1px, #0000 1px 60px),
    repeating-linear-gradient(#dedede 0 1px, #0000 1px 60px),
    repeating-linear-gradient(90deg, #f0f0f0 0 1px, #0000 1px 15px),
    repeating-linear-gradient(#f0f0f0 0 1px, #0000 1px 15px),
    #fff;
}
.diagram { position: absolute; inset: 0; width: 1250px; height: 880px; }
.node { fill: #fff; stroke: #333; stroke-width: 2; }
.dash { stroke-dasharray: 10 4; }
.rules { stroke: #a0a0a0; stroke-width: 3; }
.num { fill: #fff; font-size: 22px; font-weight: 600; text-anchor: middle; }
.phase { fill: #994c00; font-size: 13px; }
.phase .small { font-size: 12px; }
.desc { fill: #333; }
.date { fill: #994c00; }

.vscroll { background: #fff; padding: 249px 0 0 1px; }
.vscroll i { display: block; height: 218px; border-radius: 4px; background: #c2c2c2; }
.hscroll { grid-column: 1 / 3; padding: 1px 286px 0 534px; }
.hscroll i { display: block; height: 7px; border-radius: 4px; background: #c2c2c2; }

.notice {
  position: absolute;
  top: 0;
  left: 418px;
  display: flex;
  align-items: center;
  height: 29px;
  padding: 0 35px 1px 39px;
  border-radius: 0 0 4px 4px;
  background: #fde7d0;
  color: #222;
  font-size: 13px;
  white-space: nowrap;
}
.notice a { color: #3a6fe0; margin: 0 35px 0 4px; }

.dock {
  position: absolute;
  top: 0;
  right: 9px;
  display: flex;
  flex-direction: column;
  align-items: center;
  gap: 10px;
  width: 36px;
  height: 145px;
  padding-top: 11px;
  border-top: 9px solid #444;
  background: #f5f5f5;
  box-shadow: 0 1px 4px #0006;
}
.dock svg { width: 20px; height: 20px; fill: none; stroke: #222; stroke-width: 1.2; }

.navigator { position: absolute; right: 20px; bottom: 15px; border: 1px solid #888; background: #f4f4f4; box-shadow: 0 0 10px #0008; }
.navigator svg { width: 260px; height: 186px; }

/* Status bar */
.status {
  flex: none;
  display: flex;
  align-items: center;
  gap: 14px;
  height: 35px;
  border-top: 1px solid #ccc;
  background: #f2f2f2;
  color: #222;
}
.status a { color: #5b9bec; }
.status svg { margin-left: -8px; }
.more { display: flex; align-items: center; justify-content: center; width: 148px; height: 34px; padding-bottom: 1px; margin-right: 1px; border-right: 1px solid #8f8f8f; }
.more-btn { width: 76px; height: 24px; padding: 0; border: 0; border-radius: 3px; background: #60a9f6; color: #fff; font: 13px/24px "Open Sans", "Noto Sans CJK SC", sans-serif; }

/* Memory warning */
.popup {
  position: absolute;
  right: 6px;
  bottom: 94px;
  display: grid;
  grid-template-columns: 1fr 72px;
  row-gap: 12px;
  align-items: center;
  width: 269px;
  height: 75px;
  padding: 7px 9px 9px 16px;
  background: #1c1f2a;
  box-shadow: 0 0 6px #0008;
  color: #fff;
}
.shield { position: absolute; left: 16px; top: -10px; width: 42px; height: 42px; }
.popup-title { grid-column: 1 / 3; padding-left: 57px; font-size: 13px; }
.popup-title em { color: #f5dc3a; font-style: normal; }
.popup-desc { color: #7d8089; }
.boost { height: 21px; padding: 0; border: 0; background: #09c47c; color: #fff; font: 12px/20px "Open Sans", "Noto Sans CJK SC", sans-serif; }
.popup-close { position: absolute; right: 8px; top: 7px; width: 10px; height: 10px; }

/* Input method bar and site mark */
.ime { position: absolute; right: 0; bottom: 0; border: 1px solid #ccc; background: #fff; }
.ime svg { width: 170px; height: 28px; }
.ifly { fill: #4060d8; font-size: 8px; font-weight: 700; text-anchor: middle; }
.watermark { position: absolute; right: 10px; bottom: 8px; display: flex; opacity: 0.75; }
.watermark svg { width: 44px; height: 42px; }
.watermark div { display: flex; flex-direction: column; justify-content: center; }
.watermark b { color: #5f9fd6; font-size: 21px; line-height: 24px; font-weight: 600; }
.watermark span { color: #55b866; font-size: 17px; line-height: 20px; }
```
